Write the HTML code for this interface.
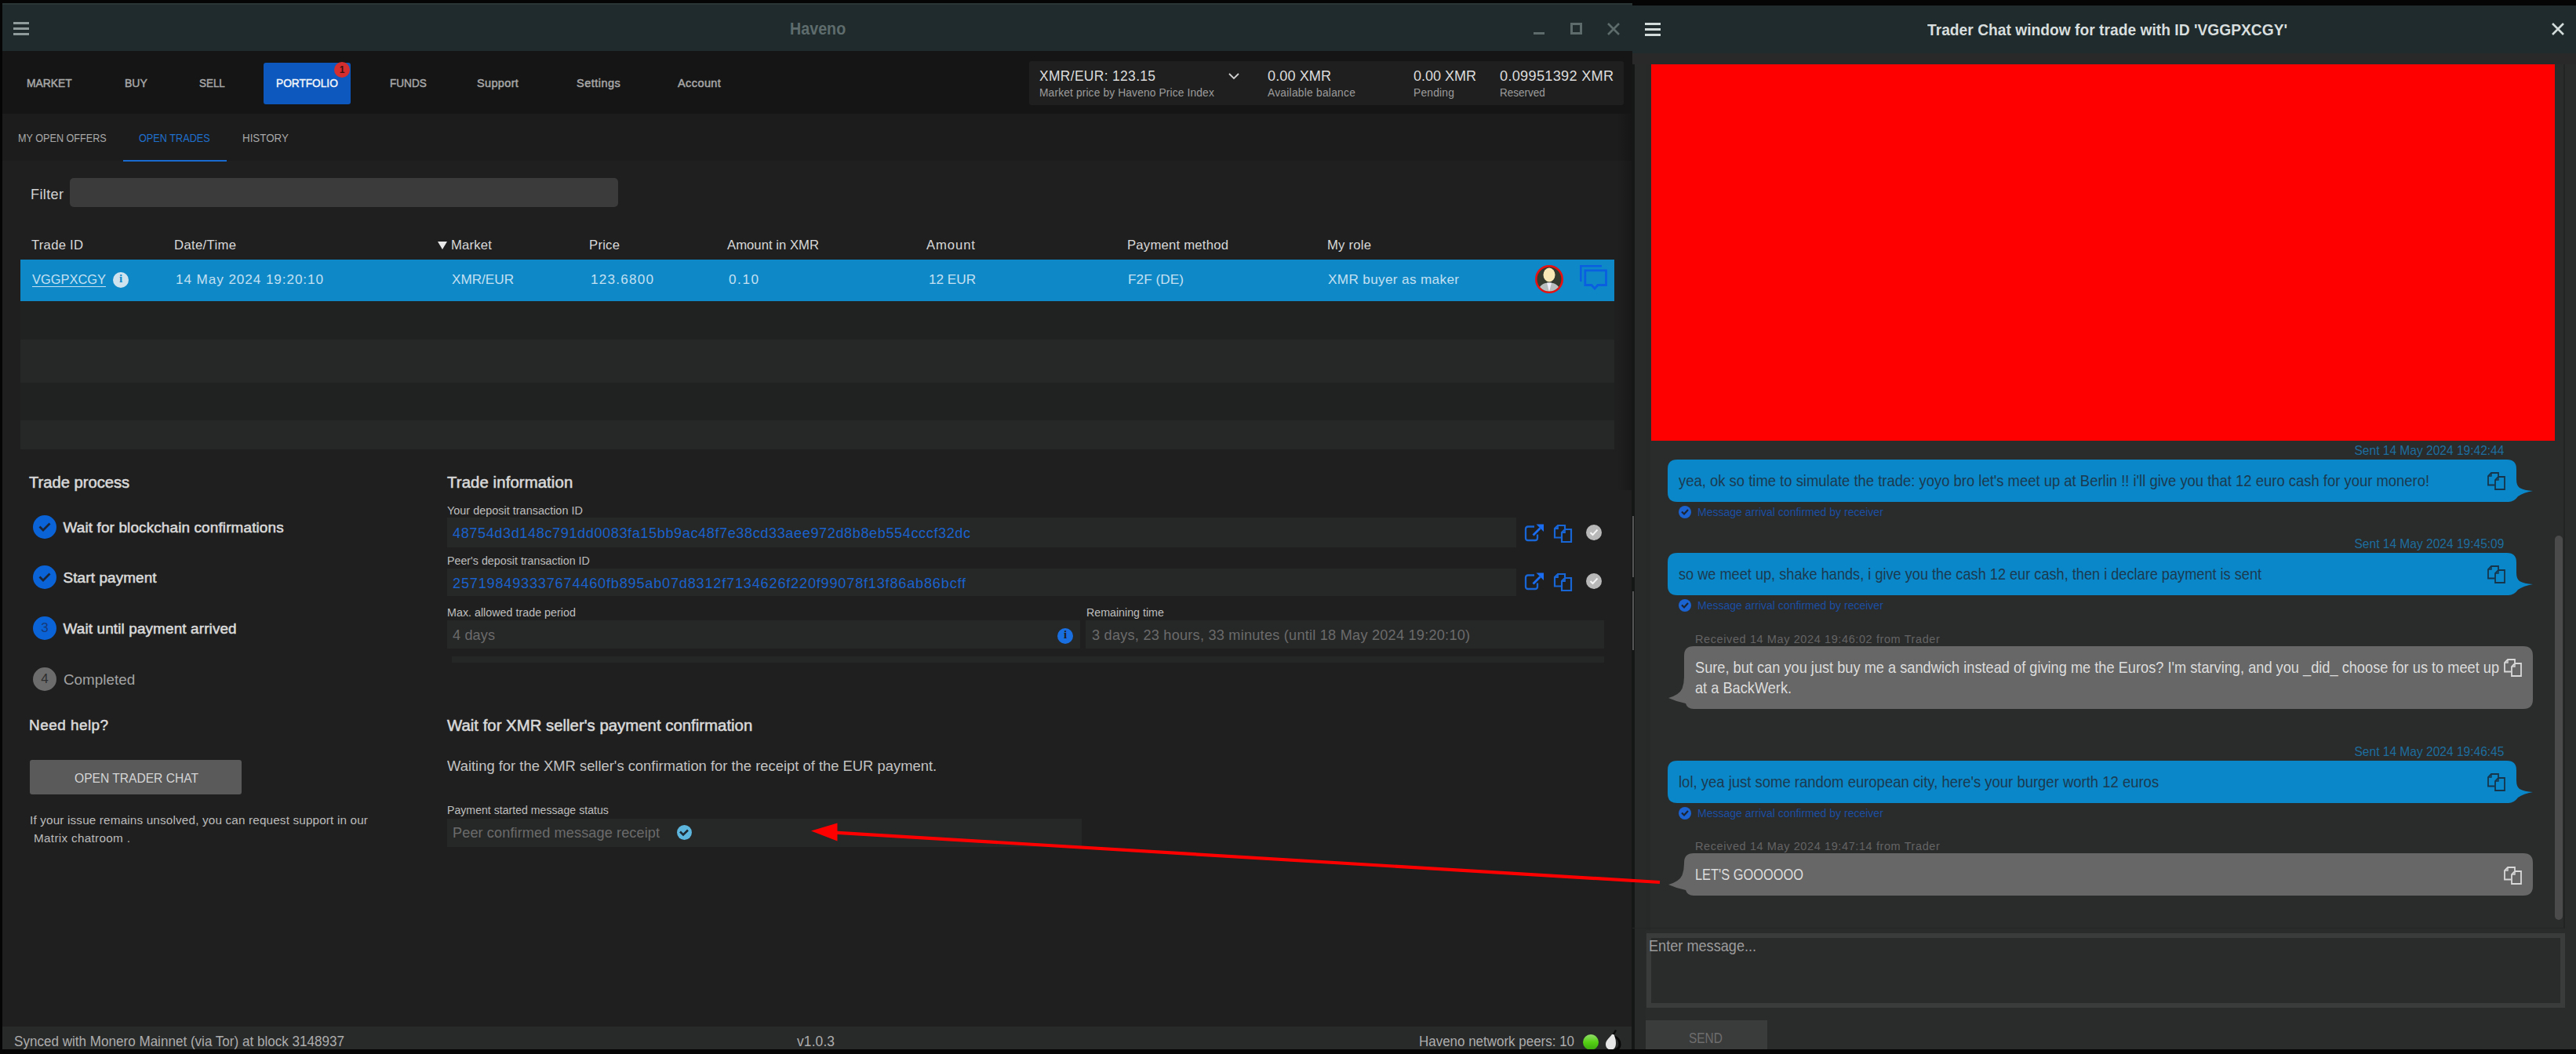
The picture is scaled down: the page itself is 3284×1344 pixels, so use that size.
<!DOCTYPE html>
<html><head><meta charset="utf-8"><title>Haveno</title>
<style>
html,body{margin:0;padding:0;width:3284px;height:1344px;overflow:hidden;background:#050505;}
body{position:relative;font-family:"Liberation Sans",sans-serif;}
.a{position:absolute;}
.t{position:absolute;white-space:pre;line-height:1;}
</style></head><body>
<!-- LEFT WINDOW -->
<div class="a" style="left:3px;top:4px;width:2078px;height:61px;background:#1f2b2c;"></div>
<div class="a" style="left:3px;top:4px;width:2078px;height:2px;background:#2a3636;"></div>
<!-- hamburger -->
<div class="a" style="left:17px;top:28px;width:20px;height:3px;background:#8f9b9b;"></div>
<div class="a" style="left:17px;top:35px;width:20px;height:3px;background:#8f9b9b;"></div>
<div class="a" style="left:17px;top:42px;width:20px;height:3px;background:#8f9b9b;"></div>
<!-- window buttons -->
<div class="a" style="left:1955px;top:41px;width:14px;height:3px;background:#5e6b6b;"></div>
<div class="a" style="left:2002px;top:29px;width:9px;height:9px;border:3px solid #5e6b6b;"></div>
<svg class="a" style="left:2048px;top:28px" width="18" height="18" viewBox="0 0 18 18"><path d="M2 2L16 16M16 2L2 16" stroke="#5e6b6b" stroke-width="2.6"/></svg>
<!-- nav bar -->
<div class="a" style="left:3px;top:65px;width:2078px;height:80px;background:#151515;"></div>
<div class="a" style="left:336px;top:80px;width:111px;height:53px;background:#0c58be;border-radius:3px;"></div>
<div class="a" style="left:426px;top:79px;width:20px;height:20px;background:#d42e2e;border-radius:50%;"></div>
<div class="a" style="left:426px;top:79px;width:20px;height:20px;line-height:20px;text-align:center;font-size:12px;font-weight:bold;color:#3a1010;">1</div>
<div class="a" style="left:1312px;top:78px;width:758px;height:56px;background:#1f1f1f;border-radius:3px;"></div>
<svg class="a" style="left:1565px;top:92px" width="16" height="10" viewBox="0 0 16 10"><path d="M2 2L8 8L14 2" fill="none" stroke="#cfcfcf" stroke-width="1.8"/></svg>
<!-- content bg -->
<div class="a" style="left:3px;top:145px;width:2078px;height:1164px;background:#1f1f1f;"></div><div class="a" style="left:3px;top:145px;width:2078px;height:60px;background:#1c1c1c;"></div>
<div class="a" style="left:157px;top:204px;width:132px;height:2px;background:#1a6bd0;"></div>
<div class="a" style="left:89px;top:227px;width:699px;height:37px;background:#3b3b3b;border-radius:5px;"></div>
<!-- table -->

<div class="a" style="left:26px;top:331px;width:2032px;height:53px;background:#0f88c8;"></div>
<div class="a" style="left:26px;top:384px;width:2032px;height:189px;background:#202121;"></div><div class="a" style="left:26px;top:433px;width:2032px;height:55px;background:#262727;"></div>
<div class="a" style="left:26px;top:536px;width:2032px;height:37px;background:#262727;"></div>
<svg class="a" style="left:557px;top:307px" width="14" height="12" viewBox="0 0 14 12"><path d="M1 1H13L7 11Z" fill="#e8e8e8"/></svg>
<!-- info icon in row -->
<div class="a" style="left:144px;top:347px;width:20px;height:20px;border-radius:50%;background:#cfe3ee;"></div>
<div class="a" style="left:144px;top:347px;width:20px;height:20px;line-height:20px;text-align:center;font:bold 15px 'Liberation Serif';color:#0f88c8;">i</div>
<!-- avatar -->
<svg class="a" style="left:1955px;top:336px" width="40" height="40" viewBox="0 0 40 40">
<defs><clipPath id="cav"><circle cx="20" cy="20" r="15.5"/></clipPath></defs>
<circle cx="20" cy="20" r="18" fill="#e81010"/>
<circle cx="20" cy="20" r="15.5" fill="#343a2e"/>
<g clip-path="url(#cav)"><ellipse cx="20" cy="14.5" rx="7.5" ry="9" fill="#f8e9b6"/><path d="M5 40C6 28 12 24.5 20 24.5C28 24.5 34 28 35 40Z" fill="#b8bebd"/><path d="M17 24.5L20 36L23 24.5Z" fill="#f0eef8"/></g>
</svg>
<!-- chat icon -->
<svg class="a" style="left:2013px;top:336px" width="38" height="36" viewBox="0 0 38 36"><path d="M2.3 23V3.3H29" fill="none" stroke="#0a5fe0" stroke-width="2.6"/><path d="M7.8 8.8H34.5V27.5H24L20 32L16 27.5H7.8Z" fill="none" stroke="#0a5fe0" stroke-width="2.8"/></svg>
<!-- step circles -->
<div class="a" style="left:42px;top:657px;width:30px;height:30px;border-radius:50%;background:#0b63d8;"></div>
<svg class="a" style="left:42px;top:657px" width="30" height="30" viewBox="0 0 30 30"><path d="M8.5 14.5L13 19L21.5 10.5" fill="none" stroke="#1a2638" stroke-width="2.8"/></svg>
<div class="a" style="left:42px;top:721px;width:30px;height:30px;border-radius:50%;background:#0b63d8;"></div>
<svg class="a" style="left:42px;top:721px" width="30" height="30" viewBox="0 0 30 30"><path d="M8.5 14.5L13 19L21.5 10.5" fill="none" stroke="#1a2638" stroke-width="2.8"/></svg>
<div class="a" style="left:42px;top:786px;width:30px;height:30px;border-radius:50%;background:#0b63d8;"></div>
<div class="a" style="left:42px;top:786px;width:30px;height:30px;line-height:30px;text-align:center;font-size:17px;color:#163a78;">3</div>
<div class="a" style="left:42px;top:851px;width:30px;height:30px;border-radius:50%;background:#6c6c6c;"></div>
<div class="a" style="left:42px;top:851px;width:30px;height:30px;line-height:30px;text-align:center;font-size:17px;color:#2e2e2e;">4</div>
<!-- button -->
<div class="a" style="left:38px;top:969px;width:270px;height:44px;background:#5a5a5b;border-radius:3px;"></div>
<!-- fields -->
<div class="a" style="left:570px;top:660px;width:1363px;height:38px;background:#262727;"></div>
<div class="a" style="left:570px;top:725px;width:1363px;height:35px;background:#262727;"></div>
<div class="a" style="left:570px;top:791px;width:807px;height:36px;background:#262727;"></div>
<div class="a" style="left:1384px;top:791px;width:661px;height:36px;background:#262727;"></div>
<div class="a" style="left:576px;top:837px;width:1469px;height:8px;background:#252626;"></div>
<div class="a" style="left:570px;top:1044px;width:809px;height:36px;background:#262727;"></div>
<!-- ext link + copy + check icons row1 -->
<svg class="a" style="left:1942px;top:666px" width="28" height="28" viewBox="0 0 28 28"><path d="M14 5.5H6Q3 5.5 3 8.5V20Q3 23 6 23H15Q18 23 18 20V15.5" fill="none" stroke="#1865d6" stroke-width="2.3"/><path d="M12.5 16.5L21.5 7.5" stroke="#1a6cf0" stroke-width="2.8"/><path d="M16.5 2.5H26V12Z" fill="#1a6cf0"/></svg>
<svg class="a" style="left:1979px;top:667px" width="26" height="26" viewBox="0 0 26 26"><path d="M11.5 18.5H3V7L7 3H16V7.5" fill="none" stroke="#1865d6" stroke-width="2.2"/><path d="M7 3V7H3" fill="none" stroke="#1865d6" stroke-width="1.7600000000000002"/><path d="M16 8H24V24H12V12Z" fill="none" stroke="#1865d6" stroke-width="2.2"/><path d="M16 8V12H12" fill="none" stroke="#1865d6" stroke-width="1.7600000000000002"/></svg>
<div class="a" style="left:2022px;top:669px;width:20px;height:20px;border-radius:50%;background:#b8b8b8;"></div>
<svg class="a" style="left:2022px;top:669px" width="20" height="20" viewBox="0 0 20 20"><path d="M5.5 10L8.5 13L14.5 6.5" fill="none" stroke="#f4f4f4" stroke-width="2"/></svg>
<svg class="a" style="left:1942px;top:728px" width="28" height="28" viewBox="0 0 28 28"><path d="M14 5.5H6Q3 5.5 3 8.5V20Q3 23 6 23H15Q18 23 18 20V15.5" fill="none" stroke="#1865d6" stroke-width="2.3"/><path d="M12.5 16.5L21.5 7.5" stroke="#1a6cf0" stroke-width="2.8"/><path d="M16.5 2.5H26V12Z" fill="#1a6cf0"/></svg>
<svg class="a" style="left:1979px;top:729px" width="26" height="26" viewBox="0 0 26 26"><path d="M11.5 18.5H3V7L7 3H16V7.5" fill="none" stroke="#1865d6" stroke-width="2.2"/><path d="M7 3V7H3" fill="none" stroke="#1865d6" stroke-width="1.7600000000000002"/><path d="M16 8H24V24H12V12Z" fill="none" stroke="#1865d6" stroke-width="2.2"/><path d="M16 8V12H12" fill="none" stroke="#1865d6" stroke-width="1.7600000000000002"/></svg>
<div class="a" style="left:2022px;top:731px;width:20px;height:20px;border-radius:50%;background:#b8b8b8;"></div>
<svg class="a" style="left:2022px;top:731px" width="20" height="20" viewBox="0 0 20 20"><path d="M5.5 10L8.5 13L14.5 6.5" fill="none" stroke="#f4f4f4" stroke-width="2"/></svg>
<!-- info blue -->
<div class="a" style="left:1348px;top:801px;width:20px;height:20px;border-radius:50%;background:#1a6fe0;"></div>
<div class="a" style="left:1348px;top:801px;width:20px;height:20px;line-height:20px;text-align:center;font:bold 15px 'Liberation Serif';color:#1f1f1f;">i</div>
<!-- check light blue -->
<div class="a" style="left:863px;top:1052px;width:19px;height:19px;border-radius:50%;background:#5cb6de;"></div>
<svg class="a" style="left:862px;top:1052px" width="20" height="20" viewBox="0 0 20 20"><path d="M5 8.5L9 12.5L15 6.5" fill="none" stroke="#1d2a33" stroke-width="2.6"/></svg>
<div class="a" style="left:2062px;top:145px;width:18px;height:480px;background:linear-gradient(90deg,rgba(0,0,0,0),rgba(0,0,0,0.22));"></div>
<!-- status bar -->
<div class="a" style="left:3px;top:1309px;width:2078px;height:29px;background:#282929;"></div>
<div class="a" style="left:2018px;top:1318.5px;width:20px;height:20px;border-radius:50%;background:linear-gradient(#92dc6a,#55d014 50%,#3aa810);"></div>
<svg class="a" style="left:2044px;top:1312px" width="24" height="28" viewBox="0 0 24 28"><path d="M14 10C18 11 21 15 21 20C21 24 18 26.5 15 26.5" fill="none" stroke="#080808" stroke-width="3.2"/><path d="M13.5 7C14.5 10 16 13 16 18C16 23 14 26.5 9.5 26.5C5.5 26.5 3 23.5 3 19.5C3 14.5 8 11 11 7Z" fill="#e6e6e6"/><path d="M13 7L16 1.5" stroke="#0a0a0a" stroke-width="2.4"/></svg>

<!-- CHAT WINDOW -->
<div class="a" style="left:2081px;top:7px;width:1203px;height:1331px;background:#2a2b2b;"></div>
<div class="a" style="left:2081px;top:7px;width:1203px;height:61px;background:#1f2b2c;"></div>
<div class="a" style="left:2081px;top:68px;width:1203px;height:14px;background:#2a292a;"></div>
<div class="a" style="left:2097px;top:29px;width:20px;height:3px;background:#d2dada;"></div>
<div class="a" style="left:2097px;top:36px;width:20px;height:3px;background:#d2dada;"></div>
<div class="a" style="left:2097px;top:43px;width:20px;height:3px;background:#d2dada;"></div>
<svg class="a" style="left:3252px;top:28px" width="18" height="18" viewBox="0 0 18 18"><path d="M2 2L16 16M16 2L2 16" stroke="#d2dada" stroke-width="2.6"/></svg>
<div class="a" style="left:2081px;top:82px;width:17px;height:1256px;background:#282929;"></div><div class="a" style="left:2098px;top:82px;width:6px;height:1104px;background:#272828;"></div>
<div class="a" style="left:2080px;top:82px;width:4px;height:1256px;background:#151616;"></div><div class="a" style="left:2081px;top:658px;width:2px;height:78px;background:#555;"></div><div class="a" style="left:2081px;top:754px;width:2px;height:75px;background:#555;"></div>
<div class="a" style="left:3268px;top:82px;width:2px;height:1102px;background:#222323;"></div>
<div class="a" style="left:2105px;top:82px;width:1152px;height:480px;background:#ff0000;"></div>
<div class="a" style="left:3257px;top:683px;width:10px;height:490px;background:#4b4b4b;border-radius:5px;"></div>
<!-- bubbles -->
<svg class="a" style="left:2120px;top:580px" width="1120" height="70" viewBox="0 0 1120 70"><path d="M18 6H1076Q1088 6 1088 18V31Q1088 39 1092 42Q1098 45.5 1109 46Q1097 48 1090 53Q1085 60 1078 60H18Q6 60 6 48V18Q6 6 18 6Z" fill="#0a87c8"/></svg>
<svg class="a" style="left:2120px;top:699px" width="1120" height="70" viewBox="0 0 1120 70"><path d="M18 6H1076Q1088 6 1088 18V31Q1088 39 1092 42Q1098 45.5 1109 46Q1097 48 1090 53Q1085 60 1078 60H18Q6 60 6 48V18Q6 6 18 6Z" fill="#0a87c8"/></svg>
<svg class="a" style="left:2120px;top:964px" width="1120" height="70" viewBox="0 0 1120 70"><path d="M18 6H1076Q1088 6 1088 18V31Q1088 39 1092 42Q1098 45.5 1109 46Q1097 48 1090 53Q1085 60 1078 60H18Q6 60 6 48V18Q6 6 18 6Z" fill="#0a87c8"/></svg>
<svg class="a" style="left:2120px;top:818px" width="1120" height="92" viewBox="0 0 1120 92"><path d="M39 6H1097Q1109 6 1109 18V74Q1109 86 1097 86H39Q31 86 29 79Q18 77 7 72Q21 68 24.5 60Q27 53 27 45V18Q27 6 39 6Z" fill="#676767"/></svg>
<svg class="a" style="left:2120px;top:1082px" width="1120" height="66" viewBox="0 0 1120 66"><path d="M39 6H1097Q1109 6 1109 18V48Q1109 60 1097 60H39Q31 60 29 53Q18 51 7 46Q21 42 24.5 34Q27 27 27 19V18Q27 6 39 6Z" fill="#676767"/></svg>
<!-- copy icons in bubbles -->
<svg class="a" style="left:3169px;top:600px" width="26" height="26" viewBox="0 0 26 26"><path d="M11.5 18.5H3V7L7 3H16V7.5" fill="none" stroke="#17354a" stroke-width="1.8"/><path d="M7 3V7H3" fill="none" stroke="#17354a" stroke-width="1.4400000000000002"/><path d="M16 8H24V24H12V12Z" fill="none" stroke="#17354a" stroke-width="1.8"/><path d="M16 8V12H12" fill="none" stroke="#17354a" stroke-width="1.4400000000000002"/></svg>
<svg class="a" style="left:3169px;top:719px" width="26" height="26" viewBox="0 0 26 26"><path d="M11.5 18.5H3V7L7 3H16V7.5" fill="none" stroke="#17354a" stroke-width="1.8"/><path d="M7 3V7H3" fill="none" stroke="#17354a" stroke-width="1.4400000000000002"/><path d="M16 8H24V24H12V12Z" fill="none" stroke="#17354a" stroke-width="1.8"/><path d="M16 8V12H12" fill="none" stroke="#17354a" stroke-width="1.4400000000000002"/></svg>
<svg class="a" style="left:3169px;top:984px" width="26" height="26" viewBox="0 0 26 26"><path d="M11.5 18.5H3V7L7 3H16V7.5" fill="none" stroke="#17354a" stroke-width="1.8"/><path d="M7 3V7H3" fill="none" stroke="#17354a" stroke-width="1.4400000000000002"/><path d="M16 8H24V24H12V12Z" fill="none" stroke="#17354a" stroke-width="1.8"/><path d="M16 8V12H12" fill="none" stroke="#17354a" stroke-width="1.4400000000000002"/></svg>
<svg class="a" style="left:3190px;top:838px" width="26" height="26" viewBox="0 0 26 26"><path d="M11.5 18.5H3V7L7 3H16V7.5" fill="none" stroke="#d8d8d8" stroke-width="1.8"/><path d="M7 3V7H3" fill="none" stroke="#d8d8d8" stroke-width="1.4400000000000002"/><path d="M16 8H24V24H12V12Z" fill="none" stroke="#d8d8d8" stroke-width="1.8"/><path d="M16 8V12H12" fill="none" stroke="#d8d8d8" stroke-width="1.4400000000000002"/></svg>
<svg class="a" style="left:3190px;top:1103px" width="26" height="26" viewBox="0 0 26 26"><path d="M11.5 18.5H3V7L7 3H16V7.5" fill="none" stroke="#d8d8d8" stroke-width="1.8"/><path d="M7 3V7H3" fill="none" stroke="#d8d8d8" stroke-width="1.4400000000000002"/><path d="M16 8H24V24H12V12Z" fill="none" stroke="#d8d8d8" stroke-width="1.8"/><path d="M16 8V12H12" fill="none" stroke="#d8d8d8" stroke-width="1.4400000000000002"/></svg>
<!-- status checks -->
<div class="a" style="left:2140px;top:645px;width:16px;height:16px;border-radius:50%;background:#1a63d0;"></div><svg class="a" style="left:2140px;top:645px" width="16" height="16" viewBox="0 0 16 16"><path d="M4 7.5L7 10.5L12 5" fill="none" stroke="#1b2433" stroke-width="2.2"/></svg>
<div class="a" style="left:2140px;top:764px;width:16px;height:16px;border-radius:50%;background:#1a63d0;"></div><svg class="a" style="left:2140px;top:764px" width="16" height="16" viewBox="0 0 16 16"><path d="M4 7.5L7 10.5L12 5" fill="none" stroke="#1b2433" stroke-width="2.2"/></svg>
<div class="a" style="left:2140px;top:1029px;width:16px;height:16px;border-radius:50%;background:#1a63d0;"></div><svg class="a" style="left:2140px;top:1029px" width="16" height="16" viewBox="0 0 16 16"><path d="M4 7.5L7 10.5L12 5" fill="none" stroke="#1b2433" stroke-width="2.2"/></svg>
<!-- input -->
<div class="a" style="left:2081px;top:1183px;width:1189px;height:1px;background:#242525;"></div>
<div class="a" style="left:2099px;top:1190px;width:1159px;height:83px;border:6px solid #3a3b3b;background:#2a2b2b;"></div>
<div class="a" style="left:2098px;top:1301px;width:155px;height:37px;background:#3a3b3b;"></div>
<!-- arrow -->
<svg class="a" style="left:0;top:0" width="3284" height="1344" viewBox="0 0 3284 1344"><path d="M1064 1061.6L2116 1125" stroke="#ff0000" stroke-width="4.2"/><path d="M1034 1059.6L1067.5 1049.5L1067.5 1072.5Z" fill="#ff0000"/></svg>
<!-- bottom black -->
<div class="a" style="left:0;top:1338px;width:3284px;height:6px;background:#050505;"></div>

<div class="t" id="t0" style="left:1007.0px;top:26.47px;font-size:21.80px;font-weight:bold;color:#5e6c6d;letter-spacing:0.000px;transform:scaleX(0.9039);transform-origin:left top;">Haveno</div>
<div class="t" id="t1" style="left:34.0px;top:98.65px;font-size:14.53px;font-weight:normal;color:#a9a9a9;letter-spacing:0.000px;transform:scaleX(0.9559);transform-origin:left top;-webkit-text-stroke:0.45px currentColor;">MARKET</div>
<div class="t" id="t2" style="left:159.0px;top:98.65px;font-size:14.53px;font-weight:normal;color:#a9a9a9;letter-spacing:0.000px;transform:scaleX(0.9659);transform-origin:left top;-webkit-text-stroke:0.45px currentColor;">BUY</div>
<div class="t" id="t3" style="left:254.0px;top:98.65px;font-size:14.53px;font-weight:normal;color:#a9a9a9;letter-spacing:0.000px;transform:scaleX(0.9237);transform-origin:left top;-webkit-text-stroke:0.45px currentColor;">SELL</div>
<div class="t" id="t4" style="left:352.0px;top:98.65px;font-size:14.53px;font-weight:normal;color:#f4f6fa;letter-spacing:0.000px;transform:scaleX(0.9426);transform-origin:left top;-webkit-text-stroke:0.45px currentColor;">PORTFOLIO</div>
<div class="t" id="t5" style="left:497.0px;top:98.65px;font-size:14.53px;font-weight:normal;color:#a9a9a9;letter-spacing:0.000px;transform:scaleX(0.9363);transform-origin:left top;-webkit-text-stroke:0.45px currentColor;">FUNDS</div>
<div class="t" id="t6" style="left:608.0px;top:98.65px;font-size:14.53px;font-weight:normal;color:#a9a9a9;letter-spacing:0.338px;transform:scaleX(1.0000);transform-origin:left top;-webkit-text-stroke:0.45px currentColor;">Support</div>
<div class="t" id="t7" style="left:735.0px;top:98.65px;font-size:14.53px;font-weight:normal;color:#a9a9a9;letter-spacing:0.488px;transform:scaleX(1.0000);transform-origin:left top;-webkit-text-stroke:0.45px currentColor;">Settings</div>
<div class="t" id="t8" style="left:864.0px;top:98.65px;font-size:14.53px;font-weight:normal;color:#a9a9a9;letter-spacing:0.403px;transform:scaleX(1.0000);transform-origin:left top;-webkit-text-stroke:0.45px currentColor;">Account</div>
<div class="t" id="t9" style="left:1325.0px;top:89.47px;font-size:17.44px;font-weight:normal;color:#dcdcdc;letter-spacing:0.329px;transform:scaleX(1.0000);transform-origin:left top;">XMR/EUR: 123.15</div>
<div class="t" id="t10" style="left:1325.0px;top:112.26px;font-size:13.81px;font-weight:normal;color:#9c9c9c;letter-spacing:0.129px;transform:scaleX(1.0000);transform-origin:left top;">Market price by Haveno Price Index</div>
<div class="t" id="t11" style="left:1616.0px;top:87.56px;font-size:18.17px;font-weight:normal;color:#dcdcdc;letter-spacing:0.051px;transform:scaleX(1.0000);transform-origin:left top;">0.00 XMR</div>
<div class="t" id="t12" style="left:1616.0px;top:112.26px;font-size:13.81px;font-weight:normal;color:#9c9c9c;letter-spacing:0.245px;transform:scaleX(1.0000);transform-origin:left top;">Available balance</div>
<div class="t" id="t13" style="left:1802.0px;top:87.56px;font-size:18.17px;font-weight:normal;color:#dcdcdc;letter-spacing:0.000px;transform:scaleX(0.9919);transform-origin:left top;">0.00 XMR</div>
<div class="t" id="t14" style="left:1802.0px;top:112.26px;font-size:13.81px;font-weight:normal;color:#9c9c9c;letter-spacing:0.198px;transform:scaleX(1.0000);transform-origin:left top;">Pending</div>
<div class="t" id="t15" style="left:1912.0px;top:87.56px;font-size:18.17px;font-weight:normal;color:#dcdcdc;letter-spacing:0.289px;transform:scaleX(1.0000);transform-origin:left top;">0.09951392 XMR</div>
<div class="t" id="t16" style="left:1912.0px;top:112.26px;font-size:13.81px;font-weight:normal;color:#9c9c9c;letter-spacing:0.000px;transform:scaleX(0.9788);transform-origin:left top;">Reserved</div>
<div class="t" id="t17" style="left:23.0px;top:168.65px;font-size:14.53px;font-weight:normal;color:#a8a8a8;letter-spacing:0.000px;transform:scaleX(0.8701);transform-origin:left top;">MY OPEN OFFERS</div>
<div class="t" id="t18" style="left:177.0px;top:168.65px;font-size:14.53px;font-weight:normal;color:#1f6fcc;letter-spacing:0.000px;transform:scaleX(0.8744);transform-origin:left top;">OPEN TRADES</div>
<div class="t" id="t19" style="left:309.0px;top:168.65px;font-size:14.53px;font-weight:normal;color:#a8a8a8;letter-spacing:0.000px;transform:scaleX(0.9188);transform-origin:left top;">HISTORY</div>
<div class="t" id="t20" style="left:39.0px;top:238.56px;font-size:18.17px;font-weight:normal;color:#d2d2d2;letter-spacing:0.346px;transform:scaleX(1.0000);transform-origin:left top;">Filter</div>
<div class="t" id="t21" style="left:40.0px;top:305.49px;font-size:16.72px;font-weight:normal;color:#d8d8d8;letter-spacing:0.235px;transform:scaleX(1.0000);transform-origin:left top;">Trade ID</div>
<div class="t" id="t22" style="left:222.0px;top:305.49px;font-size:16.72px;font-weight:normal;color:#d8d8d8;letter-spacing:0.323px;transform:scaleX(1.0000);transform-origin:left top;">Date/Time</div>
<div class="t" id="t23" style="left:575.0px;top:305.49px;font-size:16.72px;font-weight:normal;color:#d8d8d8;letter-spacing:0.188px;transform:scaleX(1.0000);transform-origin:left top;">Market</div>
<div class="t" id="t24" style="left:751.0px;top:305.49px;font-size:16.72px;font-weight:normal;color:#d8d8d8;letter-spacing:0.235px;transform:scaleX(1.0000);transform-origin:left top;">Price</div>
<div class="t" id="t25" style="left:927.0px;top:305.49px;font-size:16.72px;font-weight:normal;color:#d8d8d8;letter-spacing:0.003px;transform:scaleX(1.0000);transform-origin:left top;">Amount in XMR</div>
<div class="t" id="t26" style="left:1181.0px;top:305.49px;font-size:16.72px;font-weight:normal;color:#d8d8d8;letter-spacing:0.885px;transform:scaleX(1.0000);transform-origin:left top;">Amount</div>
<div class="t" id="t27" style="left:1437.0px;top:305.49px;font-size:16.72px;font-weight:normal;color:#d8d8d8;letter-spacing:0.209px;transform:scaleX(1.0000);transform-origin:left top;">Payment method</div>
<div class="t" id="t28" style="left:1692.0px;top:305.49px;font-size:16.72px;font-weight:normal;color:#d8d8d8;letter-spacing:0.206px;transform:scaleX(1.0000);transform-origin:left top;">My role</div>
<div class="t" id="t29" style="left:41.0px;top:347.92px;font-size:17.15px;font-weight:normal;color:#c4e0f1;letter-spacing:0.000px;transform:scaleX(0.9580);transform-origin:left top;text-decoration:underline;text-underline-offset:3px;">VGGPXCGY</div>
<div class="t" id="t30" style="left:224.0px;top:347.92px;font-size:17.15px;font-weight:normal;color:#c4e0f1;letter-spacing:0.918px;transform:scaleX(1.0000);transform-origin:left top;">14 May 2024 19:20:10</div>
<div class="t" id="t31" style="left:576.0px;top:347.92px;font-size:17.15px;font-weight:normal;color:#c4e0f1;letter-spacing:0.000px;transform:scaleX(0.9998);transform-origin:left top;">XMR/EUR</div>
<div class="t" id="t32" style="left:753.0px;top:347.92px;font-size:17.15px;font-weight:normal;color:#c4e0f1;letter-spacing:1.218px;transform:scaleX(1.0000);transform-origin:left top;">123.6800</div>
<div class="t" id="t33" style="left:929.0px;top:347.92px;font-size:17.15px;font-weight:normal;color:#c4e0f1;letter-spacing:1.551px;transform:scaleX(1.0000);transform-origin:left top;">0.10</div>
<div class="t" id="t34" style="left:1184.0px;top:347.92px;font-size:17.15px;font-weight:normal;color:#c4e0f1;letter-spacing:0.000px;transform:scaleX(1.0000);transform-origin:left top;">12 EUR</div>
<div class="t" id="t35" style="left:1438.0px;top:347.92px;font-size:17.15px;font-weight:normal;color:#c4e0f1;letter-spacing:0.080px;transform:scaleX(1.0000);transform-origin:left top;">F2F (DE)</div>
<div class="t" id="t36" style="left:1693.0px;top:347.92px;font-size:17.15px;font-weight:normal;color:#c4e0f1;letter-spacing:0.356px;transform:scaleX(1.0000);transform-origin:left top;">XMR buyer as maker</div>
<div class="t" id="t37" style="left:37.0px;top:605.38px;font-size:20.49px;font-weight:normal;color:#d9d9d9;letter-spacing:0.000px;transform:scaleX(0.9849);transform-origin:left top;-webkit-text-stroke:0.55px currentColor;">Trade process</div>
<div class="t" id="t38" style="left:80.5px;top:664.44px;font-size:18.90px;font-weight:normal;color:#d9d9d9;letter-spacing:0.145px;transform:scaleX(1.0000);transform-origin:left top;-webkit-text-stroke:0.55px currentColor;">Wait for blockchain confirmations</div>
<div class="t" id="t39" style="left:80.5px;top:728.44px;font-size:18.90px;font-weight:normal;color:#d9d9d9;letter-spacing:0.127px;transform:scaleX(1.0000);transform-origin:left top;-webkit-text-stroke:0.55px currentColor;">Start payment</div>
<div class="t" id="t40" style="left:80.5px;top:793.44px;font-size:18.90px;font-weight:normal;color:#d9d9d9;letter-spacing:0.138px;transform:scaleX(1.0000);transform-origin:left top;-webkit-text-stroke:0.55px currentColor;">Wait until payment arrived</div>
<div class="t" id="t41" style="left:80.5px;top:857.94px;font-size:18.90px;font-weight:normal;color:#a3a3a3;letter-spacing:0.000px;transform:scaleX(0.9975);transform-origin:left top;">Completed</div>
<div class="t" id="t42" style="left:37.0px;top:916.44px;font-size:18.90px;font-weight:normal;color:#d9d9d9;letter-spacing:0.499px;transform:scaleX(1.0000);transform-origin:left top;-webkit-text-stroke:0.55px currentColor;">Need help?</div>
<div class="t" id="t43" style="left:95.0px;top:984.79px;font-size:16.72px;font-weight:normal;color:#d6d6d6;letter-spacing:0.000px;transform:scaleX(0.9333);transform-origin:left top;">OPEN TRADER CHAT</div>
<div class="t" id="t44" style="left:38.0px;top:1037.53px;font-size:15.26px;font-weight:normal;color:#bbbbbb;letter-spacing:0.172px;transform:scaleX(1.0000);transform-origin:left top;">If your issue remains unsolved, you can request support in our</div>
<div class="t" id="t45" style="left:43.0px;top:1061.03px;font-size:15.26px;font-weight:normal;color:#bbbbbb;letter-spacing:0.320px;transform:scaleX(1.0000);transform-origin:left top;">Matrix chatroom .</div>
<div class="t" id="t46" style="left:570.0px;top:604.70px;font-size:20.35px;font-weight:normal;color:#d9d9d9;letter-spacing:0.096px;transform:scaleX(1.0000);transform-origin:left top;-webkit-text-stroke:0.55px currentColor;">Trade information</div>
<div class="t" id="t47" style="left:570.0px;top:643.03px;font-size:15.26px;font-weight:normal;color:#bebebe;letter-spacing:0.000px;transform:scaleX(0.9470);transform-origin:left top;">Your deposit transaction ID</div>
<div class="t" id="t48" style="left:577.0px;top:670.56px;font-size:18.17px;font-weight:normal;color:#1a62cc;letter-spacing:0.574px;transform:scaleX(1.0000);transform-origin:left top;">48754d3d148c791dd0083fa15bb9ac48f7e38cd33aee972d8b8eb554cccf32dc</div>
<div class="t" id="t49" style="left:570.0px;top:707.03px;font-size:15.26px;font-weight:normal;color:#bebebe;letter-spacing:0.000px;transform:scaleX(0.9351);transform-origin:left top;">Peer's deposit transaction ID</div>
<div class="t" id="t50" style="left:577.0px;top:734.56px;font-size:18.17px;font-weight:normal;color:#1a62cc;letter-spacing:0.787px;transform:scaleX(1.0000);transform-origin:left top;">257198493337674460fb895ab07d8312f7134626f220f99078f13f86ab86bcff</div>
<div class="t" id="t51" style="left:570.0px;top:773.03px;font-size:15.26px;font-weight:normal;color:#bebebe;letter-spacing:0.000px;transform:scaleX(0.9383);transform-origin:left top;">Max. allowed trade period</div>
<div class="t" id="t52" style="left:577.0px;top:800.56px;font-size:18.17px;font-weight:normal;color:#6b6b6b;letter-spacing:0.118px;transform:scaleX(1.0000);transform-origin:left top;">4 days</div>
<div class="t" id="t53" style="left:1385.0px;top:773.03px;font-size:15.26px;font-weight:normal;color:#bebebe;letter-spacing:0.000px;transform:scaleX(0.9330);transform-origin:left top;">Remaining time</div>
<div class="t" id="t54" style="left:1392.0px;top:800.56px;font-size:18.17px;font-weight:normal;color:#6b6b6b;letter-spacing:0.228px;transform:scaleX(1.0000);transform-origin:left top;">3 days, 23 hours, 33 minutes (until 18 May 2024 19:20:10)</div>
<div class="t" id="t55" style="left:570.0px;top:914.09px;font-size:21.08px;font-weight:normal;color:#d9d9d9;letter-spacing:0.000px;transform:scaleX(0.9666);transform-origin:left top;-webkit-text-stroke:0.55px currentColor;">Wait for XMR seller's payment confirmation</div>
<div class="t" id="t56" style="left:570.0px;top:967.94px;font-size:18.90px;font-weight:normal;color:#c2c2c2;letter-spacing:0.000px;transform:scaleX(0.9733);transform-origin:left top;">Waiting for the XMR seller's confirmation for the receipt of the EUR payment.</div>
<div class="t" id="t57" style="left:570.0px;top:1025.03px;font-size:15.26px;font-weight:normal;color:#bebebe;letter-spacing:0.000px;transform:scaleX(0.9269);transform-origin:left top;">Payment started message status</div>
<div class="t" id="t58" style="left:577.0px;top:1053.06px;font-size:18.17px;font-weight:normal;color:#6b6b6b;letter-spacing:0.094px;transform:scaleX(1.0000);transform-origin:left top;">Peer confirmed message receipt</div>
<div class="t" id="t59" style="left:18.0px;top:1320.17px;font-size:17.44px;font-weight:normal;color:#adadad;letter-spacing:0.000px;transform:scaleX(0.9790);transform-origin:left top;">Synced with Monero Mainnet (via Tor) at block 3148937</div>
<div class="t" id="t60" style="left:1016.0px;top:1320.17px;font-size:17.44px;font-weight:normal;color:#adadad;letter-spacing:0.106px;transform:scaleX(1.0000);transform-origin:left top;">v1.0.3</div>
<div class="t" id="t61" style="left:1809.0px;top:1320.17px;font-size:17.44px;font-weight:normal;color:#adadad;letter-spacing:0.000px;transform:scaleX(0.9728);transform-origin:left top;">Haveno network peers: 10</div>
<div class="t" id="t62" style="left:2457.0px;top:27.70px;font-size:20.35px;font-weight:bold;color:#d8dede;letter-spacing:0.000px;transform:scaleX(0.9456);transform-origin:left top;">Trader Chat window for trade with ID 'VGGPXCGY'</div>
<div class="t" id="t63" style="right:92.0px;top:567.41px;font-size:15.99px;font-weight:normal;color:#1d6e9f;letter-spacing:0.000px;transform:scaleX(0.9721);transform-origin:right top;">Sent 14 May 2024 19:42:44</div>
<div class="t" id="t64" style="left:2140.0px;top:603.82px;font-size:19.62px;font-weight:normal;color:#1b3a50;letter-spacing:0.000px;transform:scaleX(0.9403);transform-origin:left top;">yea, ok so time to simulate the trade: yoyo bro let's meet up at Berlin !! i'll give you that 12 euro cash for your monero!</div>
<div class="t" id="t65" style="left:2164.0px;top:645.03px;font-size:15.26px;font-weight:normal;color:#1b4fa3;letter-spacing:0.000px;transform:scaleX(0.9192);transform-origin:left top;">Message arrival confirmed by receiver</div>
<div class="t" id="t66" style="right:92.0px;top:686.41px;font-size:15.99px;font-weight:normal;color:#1d6e9f;letter-spacing:0.000px;transform:scaleX(0.9721);transform-origin:right top;">Sent 14 May 2024 19:45:09</div>
<div class="t" id="t67" style="left:2140.0px;top:722.82px;font-size:19.62px;font-weight:normal;color:#1b3a50;letter-spacing:0.000px;transform:scaleX(0.9262);transform-origin:left top;">so we meet up, shake hands, i give you the cash 12 eur cash, then i declare payment is sent</div>
<div class="t" id="t68" style="left:2164.0px;top:764.03px;font-size:15.26px;font-weight:normal;color:#1b4fa3;letter-spacing:0.000px;transform:scaleX(0.9192);transform-origin:left top;">Message arrival confirmed by receiver</div>
<div class="t" id="t69" style="left:2161.0px;top:807.65px;font-size:14.53px;font-weight:normal;color:#646464;letter-spacing:0.595px;transform:scaleX(1.0000);transform-origin:left top;">Received 14 May 2024 19:46:02 from Trader</div>
<div class="t" id="t70" style="left:2161.0px;top:841.82px;font-size:19.62px;font-weight:normal;color:#dddddd;letter-spacing:0.000px;transform:scaleX(0.9289);transform-origin:left top;">Sure, but can you just buy me a sandwich instead of giving me the Euros? I'm starving, and you _did_ choose for us to meet up</div>
<div class="t" id="t71" style="left:2161.0px;top:868.32px;font-size:19.62px;font-weight:normal;color:#dddddd;letter-spacing:0.000px;transform:scaleX(0.9283);transform-origin:left top;">at a BackWerk.</div>
<div class="t" id="t72" style="right:92.0px;top:951.41px;font-size:15.99px;font-weight:normal;color:#1d6e9f;letter-spacing:0.000px;transform:scaleX(0.9721);transform-origin:right top;">Sent 14 May 2024 19:46:45</div>
<div class="t" id="t73" style="left:2140.0px;top:987.82px;font-size:19.62px;font-weight:normal;color:#1b3a50;letter-spacing:0.000px;transform:scaleX(0.9421);transform-origin:left top;">lol, yea just some random european city, here's your burger worth 12 euros</div>
<div class="t" id="t74" style="left:2164.0px;top:1029.03px;font-size:15.26px;font-weight:normal;color:#1b4fa3;letter-spacing:0.000px;transform:scaleX(0.9192);transform-origin:left top;">Message arrival confirmed by receiver</div>
<div class="t" id="t75" style="left:2161.0px;top:1071.65px;font-size:14.53px;font-weight:normal;color:#646464;letter-spacing:0.595px;transform:scaleX(1.0000);transform-origin:left top;">Received 14 May 2024 19:47:14 from Trader</div>
<div class="t" id="t76" style="left:2161.0px;top:1106.32px;font-size:19.62px;font-weight:normal;color:#dddddd;letter-spacing:0.000px;transform:scaleX(0.8362);transform-origin:left top;">LET'S GOOOOOO</div>
<div class="t" id="t77" style="left:2102.0px;top:1197.32px;font-size:19.62px;font-weight:normal;color:#9c9c9c;letter-spacing:0.000px;transform:scaleX(0.9248);transform-origin:left top;">Enter message...</div>
<div class="t" id="t78" style="left:2153.0px;top:1314.56px;font-size:18.17px;font-weight:normal;color:#6e6e6e;letter-spacing:0.000px;transform:scaleX(0.8508);transform-origin:left top;">SEND</div>
</body></html>
